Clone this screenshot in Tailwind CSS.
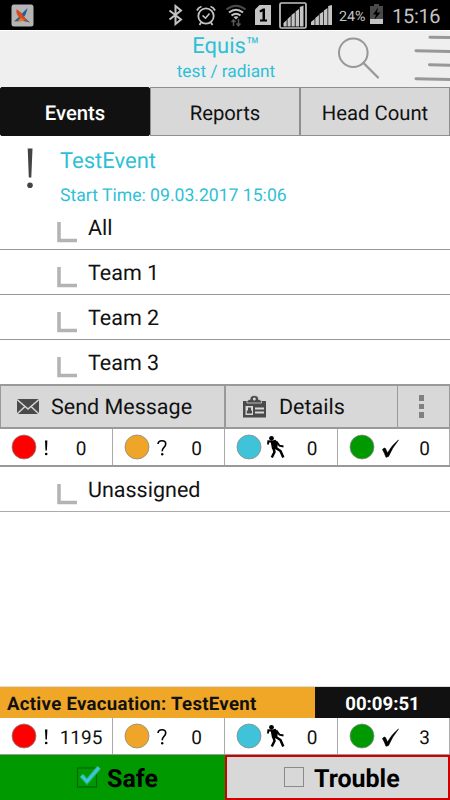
<!DOCTYPE html>
<html lang="en">
<head>
    <meta charset="UTF-8">
    <meta name="viewport" content="width=device-width, initial-scale=1.0">
    <title>Equis</title>
    <script src="https://cdn.jsdelivr.net/npm/@tailwindcss/browser@4"></script>
    <style>
        body {
            font-family: Roboto, 'Liberation Sans', sans-serif;
            text-rendering: geometricPrecision;
        }
    </style>
</head>
<body class="bg-white">
    <div class="w-[450px] h-[800px] flex flex-col overflow-hidden text-[#111]">
        <!-- Status bar -->
        <div class="h-[30px] shrink-0 bg-black flex items-center pl-[11px] text-[#c4c4c4]">
            <svg class="w-[23px] h-[23px] mr-[134px]" viewBox="0 0 23 23">
                <rect x="0.5" y="0.5" width="22" height="22" rx="2.5" fill="#b5b5b5"/>
                <path d="M16.500 4 L10 10.500 L12.500 13.500 Q15 11 16.500 4Z M13 13 L19 18.500 L12.500 17 L10.500 15Z" fill="#1c5f9c"/>
                <path d="M9 12 L3 17.500 L9 17 L12 14Z" fill="#1c5f9c"/>
                <path d="M5.500 5 Q4.500 11 9.500 14.500 Q14 17 18.500 18 Q13 14 11 9.500 Q9.500 8 5.500 5Z" fill="#d84a20"/>
                <path d="M9 14 L6 18 L12 17 L13.500 15.500Z" fill="#e07a20"/>
            </svg>
            <svg class="w-[16px] h-[22px] mr-[12px]" viewBox="0 0 16 22" fill="none" stroke="currentColor" stroke-width="2">
                <path d="M1.5 6.500 L13 15.5 L7.5 20 V2 L13 6.5 L1.5 15.500"/>
            </svg>
            <svg class="w-[20px] h-[22px] mr-[10px]" viewBox="0 0 20 22" fill="none" stroke="currentColor">
                <circle cx="10" cy="12" r="7.7" stroke-width="1.8"/>
                <path d="M6.5 11.5 L9.5 14.2 L13.5 9.5" stroke-width="1.6"/>
                <path d="M1 6.5 Q2.5 3.3 5.5 2.5 M19 6.5 Q17.5 3.3 14.5 2.5 M5 18.5 L3.5 21 M15 18.5 L16.500 21" stroke-width="1.8"/>
            </svg>
            <svg class="w-[20px] h-[23px] mr-[9px]" viewBox="0 0 20 23" fill="none">
                <path d="M0.500 5.500 Q10 -2 19.500 5.500" stroke="#4a4a4a" stroke-width="2"/>
                <path d="M3 8.500 Q10 3 17 8.500 M5.500 11.500 Q10 8 14.500 11.500" stroke="#c4c4c4" stroke-width="2"/>
                <path d="M7.500 13 Q10 11.500 12.500 13 L10 15.500Z" fill="#c4c4c4"/>
                <path d="M7.500 22 V16 M5.500 18 L7.500 15.800 L9.500 18 M12.500 15 V21.500 M10.500 19.500 L12.500 21.800 L14.500 19.500" stroke="#555" stroke-width="1.500"/>
            </svg>
            <svg class="w-[16px] h-[20px] mr-[8px]" viewBox="0 0 16 20">
                <path d="M4.500 0 H16 V20 H0 V4.500Z" fill="#c4c4c4"/>
                <path d="M4.500 5.500 L8 3.500 H10 V14.500 H12 V16.500 H5 V14.500 H7.500 V6.500 L5 7.500Z" fill="#000"/>
            </svg>
            <svg class="w-[28px] h-[27px] mr-[4px]" viewBox="0 0 28 27" fill="currentColor">
                <rect x="1" y="1" width="26" height="25" rx="1.500" fill="none" stroke="currentColor" stroke-width="1.700"/>
                <path d="M4.500 21 L7.700 18 V24.500 H4.500Z M8.500 17 L11.700 14 V24.500 H8.500Z M12.500 13 L15.800 10.500 V24.500 H12.500Z M16.600 9.500 L20 7 V24.500 H16.600Z M20.800 5 L24.500 3.500 V24.500 H20.800Z"/>
            </svg>
            <svg class="w-[21px] h-[20px] mr-[7px]" viewBox="0 0 21 20" fill="currentColor">
                <path d="M0 17 L3.600 14 V20 H0Z M4.300 13 L7.900 10 V20 H4.300Z M8.600 9 L12.200 6.500 V20 H8.600Z M12.900 5.500 L16.500 3 V20 H12.900Z M17.200 1 L21 0 V20 H17.200Z"/>
            </svg>
            <span class="w-[31px] text-[14.200px] leading-[30px] pt-[3px] whitespace-nowrap">24%</span>
            <svg class="w-[13px] h-[20px] mb-[2px]" viewBox="0 0 13 20">
                <path d="M4 0 H9 V2 H13 V15 H0 V2 H4Z" fill="#4a4a4a"/>
                <path d="M0 15 H13 V20 H0Z" fill="#c4c4c4"/>
                <path d="M8 3.500 L3 10.500 H6 L4.500 15.500 L10.500 8.500 H7Z" fill="#000"/>
            </svg>
            <span class="ml-[9px] text-[20px] leading-[30px] pt-[2px] tracking-[-0.300px] whitespace-nowrap">15:16</span>
        </div>

        <!-- App header -->
        <header class="h-[56px] shrink-0 bg-[#efefef] flex border-t border-white">
            <div class="w-[150px]"></div>
            <div class="w-[150px] flex flex-col items-center text-[#2fc0d6] whitespace-nowrap">
                <div class="text-[22px] leading-[32px] pl-[2px]">Equis™</div>
                <div class="text-[17.300px] leading-[18px] pl-[2px]">test / radiant</div>
            </div>
            <svg class="w-[150px] h-[56px]" viewBox="300 31 150 56" fill="none" stroke="#989898" stroke-linecap="round">
                <circle cx="353.300" cy="52.700" r="14.300" stroke-width="2"/>
                <path d="M363.500 63 L378 77.500" stroke-width="2.300"/>
                <path d="M430 37.300 L452 37.500 M416 50.800 L452 51.500 M429.500 64.800 L452 65.300 M416 78.700 L452 79.500" stroke-width="3"/>
            </svg>
        </header>

        <!-- Tabs -->
        <nav class="h-[51px] shrink-0 grid grid-cols-3 text-[20.300px] text-center leading-[50px] pt-px pb-px bg-[linear-gradient(#efefef_50%,#fff_50%)]">
            <div class="h-[49px] bg-[#111] text-white border border-[#111] rounded-[2px] font-medium">Events</div>
            <div class="h-[49px] bg-[#d8d8d8] border border-[#8f8f8f]">Reports</div>
            <div class="h-[49px] bg-[#d8d8d8] border border-[#8f8f8f]">Head Count</div>
        </nav>

        <!-- Current event -->
        <section class="h-[68px] shrink-0 flex text-[#2fbfd6]">
            <svg class="w-[60px] h-[60px]" viewBox="0 137 60 60" fill="#444">
                <path d="M27.700 148.500 H32.500 L31.300 177.500 H28.800Z"/>
                <circle cx="30" cy="185.300" r="2.800"/>
            </svg>
            <div class="pt-[10px] whitespace-nowrap">
                <div class="text-[22px] leading-[30px]">TestEvent</div>
                <div class="text-[17.600px] leading-[20px] mt-[9px]">Start Time: 09.03.2017 15:06</div>
            </div>
        </section>

        <div class="team h-[45px] shrink-0 flex border-b border-[#999]" data-name="All"></div>
        <div class="team h-[45px] shrink-0 flex border-b border-[#999]" data-name="Team 1"></div>
        <div class="team h-[45px] shrink-0 flex border-b border-[#999]" data-name="Team 2"></div>
        <div class="team h-[44px] shrink-0 flex" data-name="Team 3"></div>

        <!-- Actions of the selected team -->
        <div class="h-[45px] shrink-0 flex bg-[#d8d8d8] text-[21.500px] leading-[44px] border-y-2 border-[#999] whitespace-nowrap">
            <div class="w-[225px] flex border-x border-[#999]">
                <svg class="w-[50px] h-[41px]" viewBox="1 386 50 41">
                    <rect x="17" y="399" width="22" height="15" fill="#4a4a4a"/>
                    <path d="M17 399.500 L28 409 L39 399.500 M17 414 L25 406.500 M39 414 L31 406.500" fill="none" stroke="#d8d8d8" stroke-width="1.500"/>
                </svg>
                Send Message
            </div>
            <div class="w-[173px] flex border-x border-[#999]">
                <svg class="w-[53px] h-[41px]" viewBox="226 386 53 41">
                    <path d="M243 401 H266 V417.500 H243Z" fill="#4a4a4a"/>
                    <path d="M247 403 V401.500 Q247 399.500 250 399.500 Q250 395.500 254.300 395.500 Q258.600 395.500 258.600 399.500 Q261.500 399.500 261.500 401.500 V403Z" fill="#4a4a4a" stroke="#d8d8d8" stroke-width="0.800"/>
                    <circle cx="254.300" cy="399" r="1.500" fill="#d8d8d8"/>
                    <path d="M245.500 406 H253 V415 H245.500Z M255 407.500 H264 V409.500 H255Z M255 411.500 H264 V413.500 H255Z" fill="#d8d8d8"/>
                    <path d="M248 407.500 H251 V410.500 H252 V413.500 H246.800 V410.500 H248Z" fill="#4a4a4a"/>
                </svg>
                Details
            </div>
            <div class="flex-1 flex flex-col items-center gap-[3px] pt-[9px] pr-[4px] border-r border-[#999]">
                <span class="w-[5px] h-[6px] bg-[#808080]"></span>
                <span class="w-[5px] h-[5px] bg-[#808080]"></span>
                <span class="w-[5px] h-[6px] bg-[#808080]"></span>
            </div>
        </div>
        <div class="stats h-[38px] shrink-0 grid grid-cols-4 border-b-2 border-[#999]" data-counts="0,0,0,0"></div>

        <div class="team h-[45px] shrink-0 flex border-b border-[#aaa]" data-name="Unassigned"></div>

        <!-- Evacuation footer -->
        <footer class="mt-auto">
            <div class="h-[32px] flex border-t border-[#ddd] text-[18.600px] leading-[34px] font-bold whitespace-nowrap">
                <div class="w-[315px] bg-[#f0a728] pl-[7px] text-[#111] tracking-[0.300px]">Active Evacuation: TestEvent</div>
                <div class="flex-1 bg-[#111] text-white text-center">00:09:51</div>
            </div>
            <div class="stats h-[37px] grid grid-cols-4 border-b border-[#999]" data-counts="1195,0,0,3"></div>
            <div class="h-[45px] flex text-[25px] text-black leading-[49px] font-bold">
                <div class="w-[225px] bg-[#009a00] flex">
                    <svg class="w-[107px] h-[45px]" viewBox="0 755 107 45" fill="none">
                        <rect x="77.500" y="768" width="19" height="19" stroke="#08640c" stroke-width="1.200"/>
                        <path d="M81.500 775.500 L87 781.500 L99 767.500" stroke="#20b050" stroke-width="5"/>
                        <path d="M81.500 775.500 L87 781.500 L99 767.500" stroke="#3fc3e0" stroke-width="3"/>
                    </svg>
                    Safe
                </div>
                <div class="w-[225px] bg-[#d8d8d8] border-2 border-[#d00000] flex leading-[45px]">
                    <svg class="w-[87px] h-[41px]" viewBox="227 757 87 41" fill="none">
                        <rect x="284.500" y="767.500" width="19" height="19" stroke="#8a8a8a"/>
                    </svg>
                    Trouble
                </div>
            </div>
        </footer>
    </div>

    <script>
        const symbols = [
            '<path d="M45 11.500 H47.400 L46.900 21.500 H45.500Z"/><circle cx="46.200" cy="25" r="1.300"/>',
            '<path d="M45 15 Q45.300 11.800 49 11.800 Q52.700 11.800 52.700 15 Q52.700 17 50.800 18.600 Q49.200 20 49.200 22.300" fill="none" stroke="#000" stroke-width="1.600"/><circle cx="49.200" cy="25.300" r="1.200"/>',
            '<circle cx="46.500" cy="9.300" r="2.400"/><path d="M45.500 12 L50.500 10.800 L53 14 L52 20.500 L47 20Z"/><path d="M47 12.500 L43.300 12.200 L43 15.500 M51.500 12.500 L54.500 16.700 L58.500 17.500" fill="none" stroke="#000" stroke-width="1.900"/><path d="M51 19 L55.500 22 L58.300 28.500 M48.500 19.500 L49.500 23 L46.800 28.500" fill="none" stroke="#000" stroke-width="2.500"/>',
            '<path d="M44.500 20.500 Q46.500 18.300 47.500 19.500 L49.500 24 Q54 16 60.500 11 Q54 19 50.500 27.500 L48 28.300 Q46.500 24 44.500 20.500Z" stroke="#000" stroke-width="0.600"/>'
        ];
        const colors = ['#fe0000', '#efa528', '#3ec3d8', '#009a00'];
        const centers = [81, 84, 87, 87];

        document.querySelectorAll('.team').forEach(row => {
            row.innerHTML = `
                <svg class="w-[88px] h-[44px]" viewBox="0 0 88 44">
                    <path d="M59 17 V35.500 H77" fill="none" stroke="#b3b3b3" stroke-width="3.500"/>
                </svg>
                <span class="text-[21.500px] leading-[48px]">${row.dataset.name}</span>
            `;
        });

        document.querySelectorAll('.stats').forEach(row => {
            row.innerHTML = row.dataset.counts.split(',').map((count, i) => `
                <div class="relative border-r border-[#aaa]">
                    <svg class="w-[64px] h-[36px]" viewBox="0 0 64 36">
                        <circle cx="24" cy="18" r="12" fill="${colors[i]}" stroke="#8a8a8a" stroke-width="0.800"/>
                        ${symbols[i]}
                    </svg>
                    <span class="absolute top-0 -translate-x-1/2 text-[19px] leading-[39px]" style="left: ${centers[i]}px">${count}</span>
                </div>
            `).join('');
        });
    </script>
</body>
</html>
